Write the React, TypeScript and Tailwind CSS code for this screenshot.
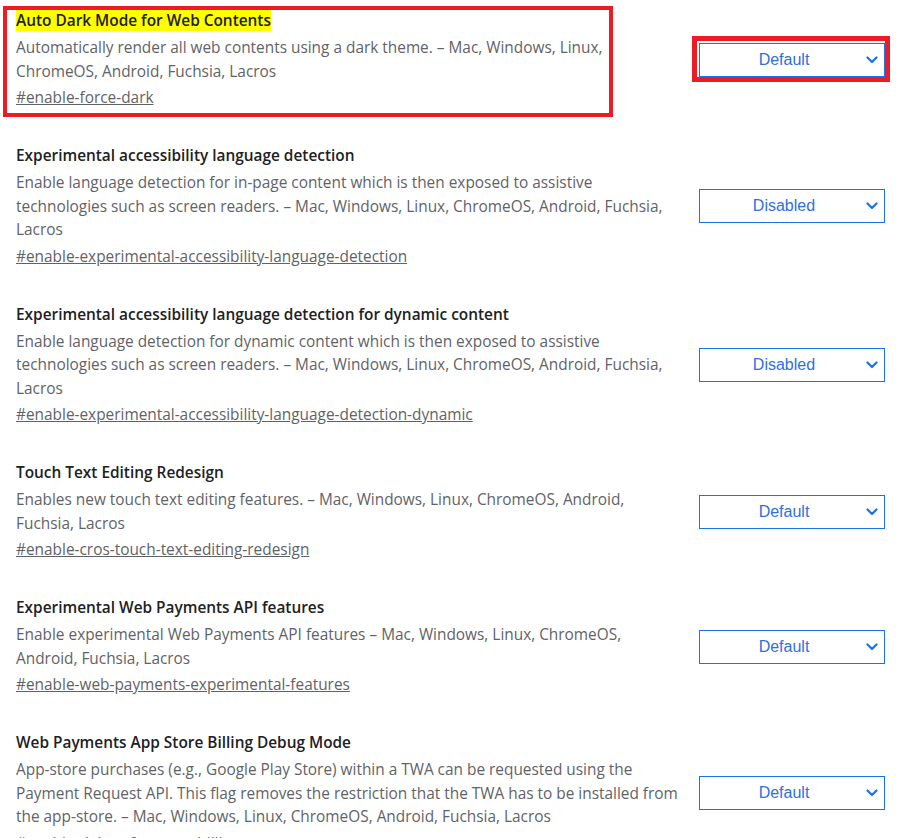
import React from "react";

type Flag = {
  title: string;
  lines: string[];
  link: string;
  value: string;
  highlight?: boolean;
};

const flags: Flag[] = [
  {
    title: "Auto Dark Mode for Web Contents",
    lines: [
      "Automatically render all web contents using a dark theme. – Mac, Windows, Linux,",
      "ChromeOS, Android, Fuchsia, Lacros",
    ],
    link: "#enable-force-dark",
    value: "Default",
    highlight: true,
  },
  {
    title: "Experimental accessibility language detection",
    lines: [
      "Enable language detection for in-page content which is then exposed to assistive",
      "technologies such as screen readers. – Mac, Windows, Linux, ChromeOS, Android, Fuchsia,",
      "Lacros",
    ],
    link: "#enable-experimental-accessibility-language-detection",
    value: "Disabled",
  },
  {
    title: "Experimental accessibility language detection for dynamic content",
    lines: [
      "Enable language detection for dynamic content which is then exposed to assistive",
      "technologies such as screen readers. – Mac, Windows, Linux, ChromeOS, Android, Fuchsia,",
      "Lacros",
    ],
    link: "#enable-experimental-accessibility-language-detection-dynamic",
    value: "Disabled",
  },
  {
    title: "Touch Text Editing Redesign",
    lines: [
      "Enables new touch text editing features. – Mac, Windows, Linux, ChromeOS, Android,",
      "Fuchsia, Lacros",
    ],
    link: "#enable-cros-touch-text-editing-redesign",
    value: "Default",
  },
  {
    title: "Experimental Web Payments API features",
    lines: [
      "Enable experimental Web Payments API features – Mac, Windows, Linux, ChromeOS,",
      "Android, Fuchsia, Lacros",
    ],
    link: "#enable-web-payments-experimental-features",
    value: "Default",
  },
  {
    title: "Web Payments App Store Billing Debug Mode",
    lines: [
      "App-store purchases (e.g., Google Play Store) within a TWA can be requested using the",
      "Payment Request API. This flag removes the restriction that the TWA has to be installed from",
      "the app-store. – Mac, Windows, Linux, ChromeOS, Android, Fuchsia, Lacros",
    ],
    link: "#enable-debug-for-store-billing",
    value: "Default",
  },
];

function Chevron() {
  return (
    <svg width="12" height="8" viewBox="0 0 12 8" className="shrink-0">
      <path d="M1.5 1.5 L6 6 L10.5 1.5" fill="none" stroke="#1a73e8" strokeWidth="2.2" strokeLinecap="round" strokeLinejoin="round" />
    </svg>
  );
}

function Select({ value, highlight }: { value: string; highlight?: boolean }) {
  return (
    <div className="relative shrink-0">
      <div className="flex h-[34px] w-[186px] items-center border border-[#1a73e8] bg-white pl-[2px] pr-[6px]">
        <span
          className="flex-1 text-center text-[16px] text-[#2f6fdf]"
          style={{ fontFamily: '"Liberation Sans", Arial, sans-serif' }}
        >
          {value}
        </span>
        <Chevron />
      </div>
      {highlight && (
        <div className="pointer-events-none absolute -left-[7px] -right-[5px] -top-[7px] -bottom-[5px] border-[5px] border-[#ed1c24]" />
      )}
    </div>
  );
}

export default function App() {
  return (
    <div
      className="relative min-h-[838px] w-[900px] overflow-hidden bg-white pt-[9px]"
      style={{ fontFamily: '"Open Sans", "Noto Sans", sans-serif' }}
    >
      <div className="pointer-events-none absolute left-[3px] top-[6px] h-[111px] w-[610px] border-[4.5px] border-[#ed1c24]" />
      <div className="flex flex-col gap-[34px]">
        {flags.map((f) => (
          <div key={f.link} className="flex items-center pl-4 pr-[15px]">
            <div className="flex-1 text-[15.4px]">
              <div className="leading-[24px] font-semibold text-[#202124]">
                <span className={f.highlight ? "bg-[#ffff00]" : ""}>{f.title}</span>
              </div>
              <div className="mt-[3px] leading-[23.5px] text-[#5f6368]">
                {f.lines.map((l) => (
                  <div key={l} className="whitespace-nowrap">
                    {l}
                  </div>
                ))}
              </div>
              <div className="mt-[3px] leading-[24px]">
                <a className="text-[#5f6368] underline">{f.link}</a>
              </div>
            </div>
            <Select value={f.value} highlight={f.highlight} />
          </div>
        ))}
      </div>
    </div>
  );
}
